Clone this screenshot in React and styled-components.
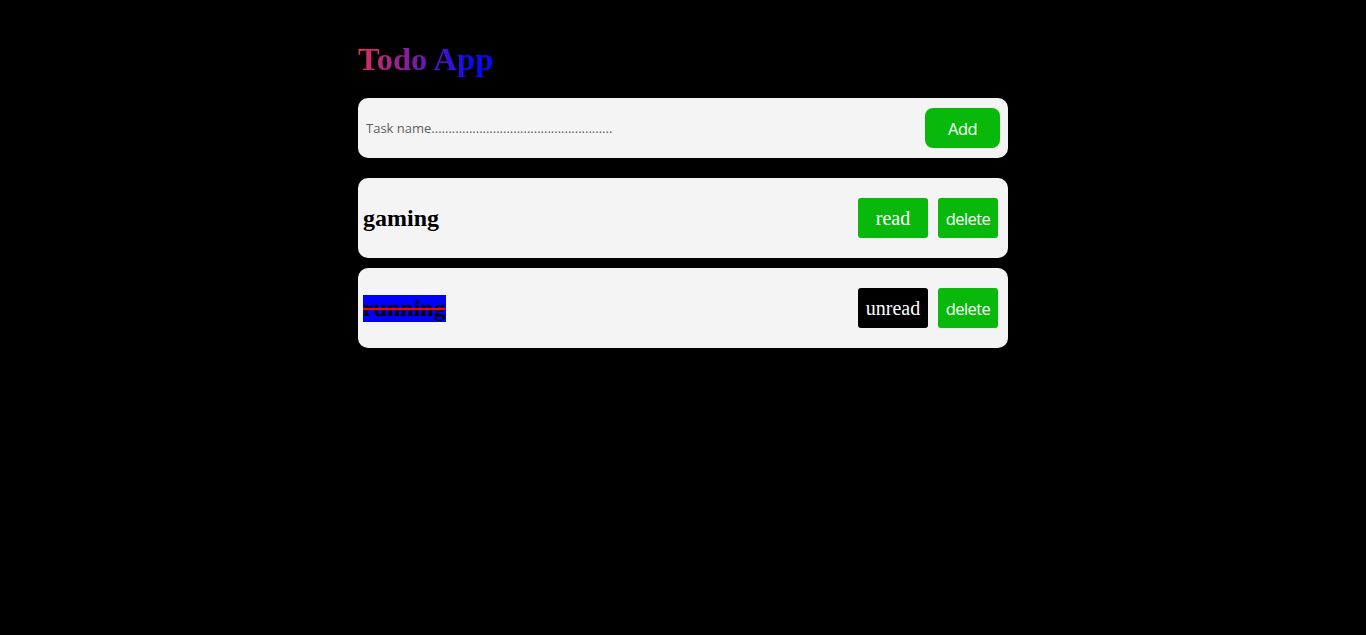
import styled, { createGlobalStyle } from 'styled-components';
import { useState } from 'react';

const GlobalStyle = createGlobalStyle`
  html, body {
    margin: 0;
    background: #000;
    font-family: "Liberation Serif", serif;
  }
`;

const Wrapper = styled.div`
  width: 650px;
  margin: 0 auto;
  padding-top: 41px;
`;

const Title = styled.h1`
  display: inline-block;
  margin: 0 0 20px;
  font-size: 32.5px;
  line-height: 37px;
  font-weight: bold;
  background: linear-gradient(to right, #e0305a, #0a0af5 85%);
  -webkit-background-clip: text;
  background-clip: text;
  color: transparent;
`;

const InputRow = styled.form`
  display: flex;
  align-items: center;
  justify-content: space-between;
  height: 60px;
  box-sizing: border-box;
  padding: 0 8px;
  background: #f4f4f4;
  border-radius: 10px;
  margin-bottom: 20px;
`;

const TaskInput = styled.input`
  flex: 1;
  border: none;
  outline: none;
  background: transparent;
  font-family: "Open Sans", sans-serif;
  font-size: 13px;
  color: #333;
  padding: 0;
  &::placeholder {
    color: #5f5f5f;
  }
`;

const AddButton = styled.button`
  width: 75px;
  height: 40px;
  border: none;
  border-radius: 8px;
  background: #08b90c;
  color: #fff;
  font-family: "Open Sans", sans-serif;
  font-size: 16.5px;
  letter-spacing: -0.6px;
  cursor: pointer;
`;

const List = styled.div`
  display: flex;
  flex-direction: column;
  gap: 10px;
`;

const TaskRow = styled.div`
  display: flex;
  align-items: center;
  justify-content: space-between;
  height: 80px;
  box-sizing: border-box;
  padding: 0 10px 0 5px;
  background: #f4f4f4;
  border-radius: 10px;
`;

const TaskName = styled.span`
  font-size: 24px;
  font-weight: bold;
  color: #000;
  ${props => props.done && `
    background: #0000ff;
    text-decoration: line-through;
    text-decoration-color: red;
  `}
`;

const Actions = styled.div`
  display: flex;
  gap: 10px;
`;

const ToggleButton = styled.button`
  width: 70px;
  height: 40px;
  border: none;
  border-radius: 3px;
  background: ${props => (props.done ? '#000' : '#08b90c')};
  color: #fff;
  font-family: "Liberation Serif", serif;
  font-size: 20px;
  padding: 0;
  cursor: pointer;
`;

const DeleteButton = styled.button`
  width: 60px;
  height: 40px;
  border: none;
  border-radius: 3px;
  background: #08b90c;
  color: #fff;
  font-family: "Open Sans", sans-serif;
  font-size: 16.5px;
  letter-spacing: -0.6px;
  padding: 0;
  cursor: pointer;
`;

const initial = [
  { id: 1, name: 'gaming', done: false },
  { id: 2, name: 'running', done: true },
];

export default function App() {
  const [tasks, setTasks] = useState(initial);
  const [text, setText] = useState('');

  const add = e => {
    e.preventDefault();
    if (!text.trim()) return;
    setTasks([...tasks, { id: Date.now(), name: text, done: false }]);
    setText('');
  };

  return (
    <>
      <GlobalStyle />
      <Wrapper>
        <Title>Todo App</Title>
        <InputRow onSubmit={add}>
          <TaskInput
            value={text}
            onChange={e => setText(e.target.value)}
            placeholder={'Task name' + '.'.repeat(53)}
          />
          <AddButton type="submit">Add</AddButton>
        </InputRow>
        <List>
          {tasks.map(t => (
            <TaskRow key={t.id}>
              <TaskName done={t.done}>{t.name}</TaskName>
              <Actions>
                <ToggleButton
                  done={t.done}
                  onClick={() => setTasks(tasks.map(x => (x.id === t.id ? { ...x, done: !x.done } : x)))}
                >
                  {t.done ? 'unread' : 'read'}
                </ToggleButton>
                <DeleteButton onClick={() => setTasks(tasks.filter(x => x.id !== t.id))}>delete</DeleteButton>
              </Actions>
            </TaskRow>
          ))}
        </List>
      </Wrapper>
    </>
  );
}
